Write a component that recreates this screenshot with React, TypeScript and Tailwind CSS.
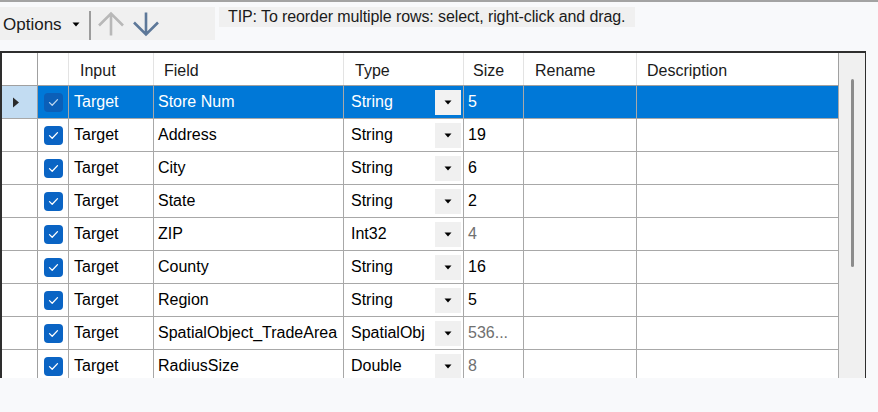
import React from "react";

type Row = { field: string; type: string; size: string; ro?: boolean };

const rows: Row[] = [
  { field: "Store Num", type: "String", size: "5" },
  { field: "Address", type: "String", size: "19" },
  { field: "City", type: "String", size: "6" },
  { field: "State", type: "String", size: "2" },
  { field: "ZIP", type: "Int32", size: "4", ro: true },
  { field: "County", type: "String", size: "16" },
  { field: "Region", type: "String", size: "5" },
  { field: "SpatialObject_TradeArea", type: "SpatialObj", size: "536...", ro: true },
  { field: "RadiusSize", type: "Double", size: "8", ro: true },
];

function Check({ selected }: { selected: boolean }) {
  return (
    <div
      className={
        "w-[19px] h-[19px] rounded-[4px] flex items-center justify-center " +
        (selected ? "bg-[#0b5fb8]" : "bg-[#0a64c4]")
      }
    >
      <svg width="11" height="9" viewBox="0 0 11 9">
        <path
          d="M1.5 4.6 L4.2 7.2 L9.5 1.6"
          fill="none"
          stroke={selected ? "#b9d3ee" : "#ffffff"}
          strokeWidth="1.3"
          strokeLinecap="round"
          strokeLinejoin="round"
        />
      </svg>
    </div>
  );
}

function Tri({ color = "#000" }: { color?: string }) {
  return (
    <svg width="8" height="5" viewBox="0 0 8 5">
      <path d="M0.5 0.5 L7.5 0.5 L4 4.5 Z" fill={color} />
    </svg>
  );
}

export default function App() {
  return (
    <div
      className="w-[878px] h-[412px] bg-[#f8f9fb] border-t-2 border-[#a3a3a3] overflow-hidden text-[#000]"
      style={{ fontFamily: '"Liberation Sans", Arial, sans-serif' }}
    >
      {/* toolbar */}
      <div className="flex items-start mt-[5px]">
        <div className="w-[215px] h-[33px] bg-[#f0f0f0] flex items-center">
          <span className="ml-[3px] mt-[3px] text-[17px] text-[#1b1b1b]">Options</span>
          <span className="ml-[10px] mt-[2px] flex">
            <Tri />
          </span>
          <div className="ml-[9px] w-[2px] h-[29px] bg-[#9c9c9c] mt-[4px]" />
          <svg className="ml-[7px] mt-[1px]" width="26" height="26" viewBox="0 0 26 26">
            <path
              d="M13 24.5 L13 2.5 M1 14.5 L13 2.5 L25 14.5"
              fill="none"
              stroke="#b8b8b8"
              strokeWidth="2.6"
              strokeLinejoin="miter"
            />
          </svg>
          <svg className="ml-[9px] mt-[1px]" width="26" height="26" viewBox="0 0 26 26">
            <path
              d="M13 1.5 L13 23.5 M1 11.5 L13 23.5 L25 11.5"
              fill="none"
              stroke="#5d7899"
              strokeWidth="2.6"
              strokeLinejoin="miter"
            />
          </svg>
        </div>
        <div className="ml-[4px] w-[416px] h-[20px] bg-[#f0f0f0] flex items-center pl-[9px] text-[16px] text-[#1b1b1b] whitespace-nowrap tracking-[-0.1px]">
          TIP: To reorder multiple rows: select, right-click and drag.
        </div>
      </div>

      {/* table */}
      <div className="mt-[11px] w-[866px] h-[327px] border-t-2 border-l-2 border-r border-[#2e2e2e] flex overflow-hidden bg-white text-[16px]">
        <div className="w-[837px] flex flex-col">
          {/* header */}
          <div className="flex h-[33px] shrink-0 border-b border-[#a0a0a0] text-[#1a1a1a] pt-[3px]">
            <div className="w-[36px] border-r border-[#a0a0a0] -mt-[3px]" />
            <div className="w-[31px] border-r border-[#e3e3e3] -mt-[3px]" />
            <div className="w-[85px] border-r border-[#e3e3e3] pl-[11px] flex items-center -mt-[3px] pt-[3px]">Input</div>
            <div className="w-[190px] border-r border-[#e3e3e3] pl-[10px] flex items-center -mt-[3px] pt-[3px]">Field</div>
            <div className="w-[120px] border-r border-[#e3e3e3] pl-[11px] flex items-center -mt-[3px] pt-[3px]">Type</div>
            <div className="w-[60px] border-r border-[#e3e3e3] pl-[9px] flex items-center -mt-[3px] pt-[3px]">Size</div>
            <div className="w-[113px] border-r border-[#e3e3e3] pl-[11px] flex items-center -mt-[3px] pt-[3px]">Rename</div>
            <div className="w-[202px] border-r border-[#a0a0a0] pl-[10px] flex items-center -mt-[3px] pt-[3px]">Description</div>
          </div>
          {rows.map((r, i) => {
            const sel = i === 0;
            const cell = sel ? "bg-[#0078d7] text-white" : "bg-white text-[#000]";
            return (
              <div key={i} className="flex h-[33px] shrink-0 border-b border-[#a8a8a8]">
                <div
                  className={
                    "w-[36px] border-r border-[#a0a0a0] flex items-center pl-[10px] " +
                    (sel ? "bg-[#c2dcf2]" : "bg-white")
                  }
                >
                  {sel && (
                    <svg width="8" height="11" viewBox="0 0 8 11">
                      <path d="M1 0.5 L7 5.5 L1 10.5 Z" fill="#2b2b2b" />
                    </svg>
                  )}
                </div>
                <div className={"w-[31px] border-r border-[#a8a8a8] flex items-center justify-center " + cell}>
                  <Check selected={sel} />
                </div>
                <div className={"w-[85px] border-r border-[#a8a8a8] pl-[5px] flex items-center " + cell}>Target</div>
                <div className={"w-[190px] border-r border-[#a8a8a8] pl-[4px] flex items-center whitespace-nowrap overflow-hidden " + cell}>
                  {r.field}
                </div>
                <div className={"w-[120px] border-r border-[#a8a8a8] pl-[7px] pr-[2px] flex items-center " + cell}>
                  <span className="flex-1">{r.type}</span>
                  <div
                    className={
                      "w-[26px] h-[25px] flex items-center justify-center " +
                      (sel ? "bg-[#f2f2f2]" : "bg-[#f0f0f0]")
                    }
                  >
                    <Tri />
                  </div>
                </div>
                <div
                  className={
                    "w-[60px] border-r border-[#a8a8a8] pl-[4px] flex items-center " +
                    cell +
                    (r.ro && !sel ? " text-[#707070]" : "")
                  }
                >
                  {r.size}
                </div>
                <div className={"w-[113px] border-r border-[#a8a8a8] " + cell} />
                <div className={"w-[202px] border-r border-[#a8a8a8] " + cell} />
              </div>
            );
          })}
        </div>
        {/* scrollbar */}
        <div className="w-[26px] bg-[#f0f0f0] relative">
          <div className="absolute left-[12px] top-[26px] w-[3px] h-[188px] rounded-full bg-[#8c8c8c]" />
        </div>
      </div>
    </div>
  );
}
